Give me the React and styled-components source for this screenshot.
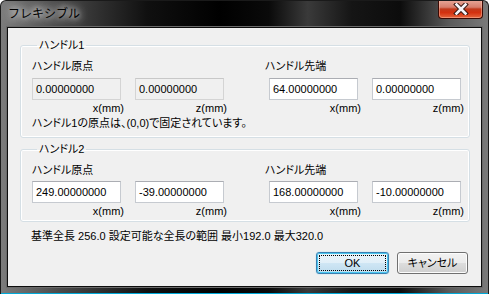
import React from 'react';
import styled, { createGlobalStyle } from 'styled-components';

const GlobalStyle = createGlobalStyle`
  html, body {
    margin: 0;
    padding: 0;
    background: #ffffff;
  }
  body {
    font-family: 'Liberation Sans', 'Noto Sans CJK JP', sans-serif;
    font-size: 11px;
    font-feature-settings: 'palt';
    color: #000;
  }
`;

const Window = styled.div`
  width: 489px;
  height: 294px;
  box-sizing: border-box;
  display: flex;
  flex-direction: column;
  border-radius: 6px 6px 0 0;
  border: 1px solid #1a1a1a;
  border-bottom: none;
  background: linear-gradient(
    to right,
    #7c7c7c 0%,
    #4a4a4a 12%,
    #101010 30%,
    #000 45%,
    #0a0a0a 55%,
    #3a3a3a 63%,
    #151515 72%,
    #0c0c0c 82%,
    #5a5a5a 92%,
    #7a7a7a 100%
  );
  overflow: hidden;
`;

const TitleBar = styled.div`
  height: 26px;
  flex: none;
  display: flex;
  align-items: flex-start;
  padding-left: 7px;
`;

const Title = styled.div`
  margin-top: 5px;
  font-size: 12px;
  line-height: 16px;
  font-feature-settings: normal;
  color: #000;
  text-shadow: 0 0 6px #fff, 0 0 10px rgba(255, 255, 255, 0.9),
    0 0 14px rgba(255, 255, 255, 0.6);
`;

const CloseButton = styled.div`
  margin-left: auto;
  margin-right: 5px;
  margin-top: -1px;
  width: 45px;
  height: 19px;
  box-sizing: border-box;
  border: 1px solid #3b0a04;
  border-top: none;
  border-radius: 0 0 4px 4px;
  background: linear-gradient(
    to bottom,
    #e9a899 0%,
    #d77e6c 40%,
    #c23a1c 50%,
    #d4300f 70%,
    #e5653c 100%
  );
  box-shadow: inset 0 0 0 1px rgba(255, 200, 180, 0.45);
  display: flex;
  align-items: center;
  justify-content: center;
`;

const FrameBody = styled.div`
  flex: 1;
  display: flex;
  flex-direction: column;
  padding: 0 6px 6px 6px;
  border-bottom: 1px solid #00a9d8;
`;

const Client = styled.div`
  flex: 1;
  background: #f0f0f0;
  border: 1px solid #0d0d0d;
  box-shadow: 0 0 0 1px #6a6a6a;
  display: flex;
  flex-direction: column;
  padding: 11px 11px 0 12px;
`;

const Group = styled.fieldset`
  margin: 0;
  padding: ${(p) => p.$pad};
  border: 1px solid #d5dfe5;
  border-radius: 3px;
  box-shadow: inset 0 0 0 1px #fff;
  min-width: 0;
`;

const Legend = styled.legend`
  margin-left: 5px;
  padding: 0 2px;
  line-height: 13px;
  font-size: 11px;
`;

const Columns = styled.div`
  display: grid;
  grid-template-columns: 237px 1fr;
`;

const Column = styled.div`
  display: flex;
  flex-direction: column;
`;

const ColumnLabel = styled.div`
  line-height: 14px;
  margin-left: ${(p) => (p.$shift ? '-4px' : '0')};
`;

const Inputs = styled.div`
  display: flex;
  gap: 14px;
  margin-top: ${(p) => p.$top}px;
`;

const Field = styled.div`
  display: flex;
  flex-direction: column;
  align-items: flex-end;
`;

const Input = styled.div`
  width: 89px;
  height: 22px;
  box-sizing: border-box;
  border: 1px solid ${(p) => (p.$readOnly ? '#d4d4d4' : '#c6cad0')};
  border-top-color: ${(p) => (p.$readOnly ? '#c8c8c8' : '#abadb3')};
  background: ${(p) => (p.$readOnly ? '#f0f0f0' : '#ffffff')};
  padding: 0 3px;
  line-height: 20px;
  font-size: 11px;
  align-self: stretch;
`;

const Unit = styled.div`
  margin-top: 2px;
  margin-right: -3px;
  line-height: 13px;
`;

const Note = styled.div`
  line-height: 14px;
  margin-top: 1px;
`;

const Spacer = styled.div`
  height: ${(p) => p.$h}px;
  flex: none;
`;

const Info = styled.div`
  padding-left: 11px;
  line-height: 14px;
`;

const Buttons = styled.div`
  display: flex;
  justify-content: flex-end;
  gap: 8px;
  margin-top: 9px;
  padding-right: 2px;
`;

const Button = styled.div`
  width: ${(p) => p.$w}px;
  height: 22px;
  box-sizing: border-box;
  border: 1px solid ${(p) => (p.$default ? '#3c7fb1' : '#707070')};
  border-radius: 3px;
  background: ${(p) =>
    p.$default
      ? 'linear-gradient(to bottom, #eaf4fa 0%, #e1eff8 50%, #cfe6f4 51%, #bedcee 100%)'
      : 'linear-gradient(to bottom, #f2f2f2 0%, #ebebeb 50%, #dddddd 51%, #cfcfcf 100%)'};
  box-shadow: ${(p) =>
    p.$default
      ? 'inset 0 0 0 1px #48c6f0, 0 0 1px #48c6f0'
      : 'inset 0 0 0 1px #fcfcfc'};
  display: flex;
  align-items: center;
  justify-content: center;
  position: relative;
  line-height: 14px;
`;

const FocusRing = styled.div`
  position: absolute;
  inset: 2px;
  border: 1px dotted #000;
  border-radius: 1px;
`;

function CloseGlyph() {
  return (
    <svg width="16" height="12" viewBox="0 0 16 12">
      <path
        d="M3.5 1.5 L12.5 10.5 M12.5 1.5 L3.5 10.5"
        stroke="#3a1a14"
        strokeWidth="4.6"
        fill="none"
        strokeLinecap="square"
      />
      <path
        d="M3.5 1.5 L12.5 10.5 M12.5 1.5 L3.5 10.5"
        stroke="#f4f4f8"
        strokeWidth="2.6"
        fill="none"
        strokeLinecap="square"
      />
    </svg>
  );
}

function HandleGroup({ title, origin, tip, readOnlyOrigin, note, pad, inputTop }) {
  return (
    <Group $pad={pad}>
      <Legend>{title}</Legend>
      <Columns>
        <Column>
          <ColumnLabel>ハンドル原点</ColumnLabel>
          <Inputs $top={inputTop}>
            <Field>
              <Input $readOnly={readOnlyOrigin}>{origin[0]}</Input>
              <Unit>x(mm)</Unit>
            </Field>
            <Field>
              <Input $readOnly={readOnlyOrigin}>{origin[1]}</Input>
              <Unit>z(mm)</Unit>
            </Field>
          </Inputs>
        </Column>
        <Column>
          <ColumnLabel $shift>ハンドル先端</ColumnLabel>
          <Inputs $top={inputTop}>
            <Field>
              <Input>{tip[0]}</Input>
              <Unit>x(mm)</Unit>
            </Field>
            <Field>
              <Input>{tip[1]}</Input>
              <Unit>z(mm)</Unit>
            </Field>
          </Inputs>
        </Column>
      </Columns>
      {note && <Note>{note}</Note>}
    </Group>
  );
}

export default function App() {
  return (
    <>
      <GlobalStyle />
      <Window>
        <TitleBar>
          <Title>フレキシブル</Title>
          <CloseButton>
            <CloseGlyph />
          </CloseButton>
        </TitleBar>
        <FrameBody>
          <Client>
            <HandleGroup
              title="ハンドル1"
              origin={['0.00000000', '0.00000000']}
              tip={['64.00000000', '0.00000000']}
              readOnlyOrigin
              note="ハンドル1の原点は、(0,0)で固定されています。"
              pad="7px 10px 7px 11px"
              inputTop={5}
            />
            <Spacer $h={5} />
            <HandleGroup
              title="ハンドル2"
              origin={['249.00000000', '-39.00000000']}
              tip={['168.00000000', '-10.00000000']}
              pad="7px 10px 3px 11px"
              inputTop={4}
            />
            <Spacer $h={7} />
            <Info>基準全長 256.0 設定可能な全長の範囲 最小192.0 最大320.0</Info>
            <Buttons>
              <Button $default $w={73}>
                <FocusRing />
                OK
              </Button>
              <Button $w={71}>キャンセル</Button>
            </Buttons>
          </Client>
        </FrameBody>
      </Window>
    </>
  );
}
